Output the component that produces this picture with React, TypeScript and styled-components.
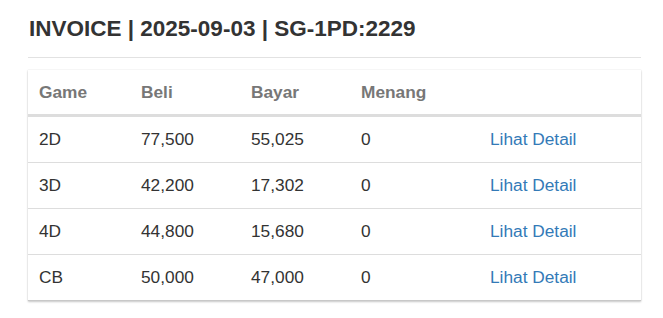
import * as React from 'react';
import styled, { createGlobalStyle } from 'styled-components';

const Global = createGlobalStyle`
  html, body {
    margin: 0;
    background: #fff;
    min-height: 100%;
  }
  body {
    font-family: "Liberation Sans", Arial, sans-serif;
    color: #333;
  }
`;

const Page = styled.div`
  padding: 13px 22px 17px 28px;
  width: 613px;
`;

const Title = styled.h1`
  margin: 0;
  padding-left: 1px;
  font-size: 22.5px;
  line-height: 32px;
  font-weight: 700;
  color: #333;
`;

const Rule = styled.hr`
  margin: 12px 0 12px;
  border: 0;
  border-top: 1px solid #e2e2e2;
`;

const Card = styled.div`
  background: #fff;
  border-bottom: 1px solid #c8c8c8;
  box-shadow: 0 1px 2px rgba(0, 0, 0, 0.2), 0 0 1px rgba(0, 0, 0, 0.15);
`;

const Row = styled.div<{ $head?: boolean }>`
  display: grid;
  grid-template-columns: 102px 110px 110px 129px 1fr;
  align-items: center;
  padding: 0 11px;
  height: 46px;
  border-top: ${(p) => (p.$head ? 'none' : '1px solid #ddd')};
  border-bottom: ${(p) => (p.$head ? '2px solid #ddd' : 'none')};
  box-sizing: border-box;
  font-size: 17.3px;
  font-weight: ${(p) => (p.$head ? 700 : 400)};
  color: ${(p) => (p.$head ? '#777' : '#333')};
`;

const Link = styled.a`
  color: #337ab7;
  text-decoration: none;
`;

const rows = [
  ['2D', '77,500', '55,025', '0'],
  ['3D', '42,200', '17,302', '0'],
  ['4D', '44,800', '15,680', '0'],
  ['CB', '50,000', '47,000', '0'],
];

export default function App() {
  return (
    <>
      <Global />
      <Page>
        <Title>INVOICE | 2025-09-03 | SG-1PD:2229</Title>
        <Rule />
        <Card>
          <Row $head>
            <span>Game</span>
            <span>Beli</span>
            <span>Bayar</span>
            <span>Menang</span>
            <span />
          </Row>
          {rows.map((r) => (
            <Row key={r[0]}>
              {r.map((c, i) => (
                <span key={i}>{c}</span>
              ))}
              <Link href="#">Lihat Detail</Link>
            </Row>
          ))}
        </Card>
      </Page>
    </>
  );
}
